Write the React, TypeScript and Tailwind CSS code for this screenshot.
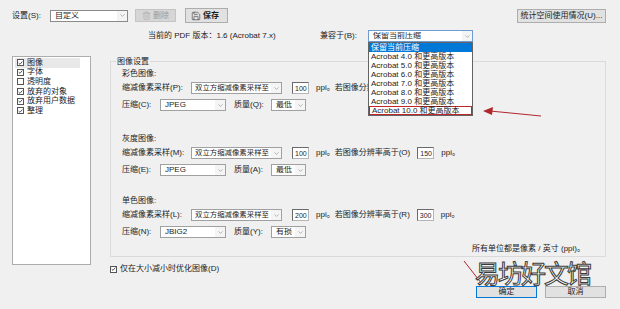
import React from 'react';
import { ChevronDown, Trash2, Save } from 'lucide-react';

const Combo = ({ text, className, border = 'border-[#a0a0a0]', tight = false }: { text: string; className: string; border?: string; tight?: boolean }) => (
  <div className={`${className} h-[12px] bg-white border ${border} flex items-center`}>
    <span className={`flex-1 whitespace-nowrap overflow-hidden ${tight ? 'pl-[3px] text-[7.4px]' : 'pl-[4px]'}`}>{text}</span>
    <span className="w-[10px] h-full flex items-center justify-center bg-[#f4f4f4]">
      <ChevronDown size={7} strokeWidth={1.5} className="text-[#666]" />
    </span>
  </div>
);

const NumInput = ({ value, className = '' }: { value: string; className?: string }) => (
  <div className={`${className} w-[17px] h-[12px] bg-white border border-[#b5b5b5] border-t-[#6a6a6a] border-l-[#6a6a6a] flex items-center pl-[2px] text-[7px]`}>
    {value}
  </div>
);

const Check = ({ checked }: { checked: boolean }) => (
  <span className="w-[7px] h-[7px] border border-[#555] bg-white flex items-center justify-center shrink-0">
    {checked && (
      <svg width="6" height="6" viewBox="0 0 6 6">
        <path d="M0.8 3.1 L2.4 4.6 L5.2 1.2" fill="none" stroke="#222" strokeWidth="0.9" />
      </svg>
    )}
  </span>
);

const categories = [
  { label: '图像', checked: true },
  { label: '字体', checked: true },
  { label: '透明度', checked: false },
  { label: '放弃的对象', checked: true },
  { label: '放弃用户数据', checked: true },
  { label: '整理', checked: true },
];

const versions = [
  'Acrobat 4.0 和更高版本',
  'Acrobat 5.0 和更高版本',
  'Acrobat 6.0 和更高版本',
  'Acrobat 7.0 和更高版本',
  'Acrobat 8.0 和更高版本',
  'Acrobat 9.0 和更高版本',
];

const SampleRow = ({ label, size, res, key2 }: { label: string; size: string; res: string; key2: string }) => (
  <div className="flex items-center h-[12px]">
    <span className="w-[69px]">{label}</span>
    <Combo text="双立方缩减像素采样至" className="w-[91px]" tight />
    <NumInput value={size} className="ml-[10px]" />
    <span className="ml-[7px]">ppi。若图像分辨率高于({key2})</span>
    <NumInput value={res} className="ml-[7px]" />
    <span className="ml-[7px]">ppi。</span>
  </div>
);

const CompressRow = ({ label, codec, qKey, quality }: { label: string; codec: string; qKey: string; quality: string }) => (
  <div className="flex items-center h-[12px]">
    <span className="w-[38px]">{label}</span>
    <Combo text={codec} className="w-[66px]" />
    <span className="ml-[8px] w-[37px]">质量({qKey}):</span>
    <Combo text={quality} className="w-[35px]" />
  </div>
);

export default function App() {
  return (
    <div className="relative w-[620px] h-[309px] overflow-hidden bg-[#f0f0f0] text-[8px] leading-none text-[#1c1c1c] font-['Liberation_Sans','Noto_Sans_CJK_SC',sans-serif]">
      {/* top row */}
      <div className="flex items-center h-[15px] mt-[8px]">
        <span className="ml-[12px] w-[38px]">设置(S):</span>
        <Combo text="自定义" className="w-[78px]" border="border-[#8a8a8a]" />
        <div className="ml-[7px] w-[41px] h-[13px] bg-[#d6d6d6] border border-[#c4c4c4] flex items-center gap-[2px] pl-[6px] text-[#9a9a9a]">
          <Trash2 size={9} strokeWidth={1.2} />
          <span>删除</span>
        </div>
        <div className="ml-[9px] w-[43px] h-[15px] bg-[#e1e1e1] border border-[#adadad] flex items-center gap-[2px] pl-[5px]">
          <Save size={10} strokeWidth={1.2} />
          <span className="font-bold">保存</span>
        </div>
        <div className="ml-auto mr-[14px] w-[89px] h-[14px] bg-[#e1e1e1] border border-[#adadad] flex items-center justify-center">
          统计空间使用情况(U)...
        </div>
      </div>

      {/* version row */}
      <div className="flex items-center h-[12px] mt-[7px]">
        <span className="ml-[148px] w-[172px]">当前的 PDF 版本：1.6 (Acrobat 7.x)</span>
        <span className="w-[48px]">兼容于(B):</span>
        <div className="relative">
          <Combo text="保留当前压缩" className="w-[105px]" border="border-[#6e9bd0]" />
          <div className="absolute left-0 top-full w-[105px] bg-white border border-[#646464] flex flex-col z-10">
            <div className="h-[9px] bg-[#0078d7] text-white flex items-center pl-[2px]">保留当前压缩</div>
            {versions.map((v) => (
              <div key={v} className="h-[9px] flex items-center pl-[2px]">{v}</div>
            ))}
            <div className="h-[9px] flex items-center pl-[2px] border border-[#c0262c]">Acrobat 10.0 和更高版本</div>
          </div>
        </div>
      </div>

      {/* main */}
      <div className="flex mt-[14px]">
        <div className="ml-[12px] w-[79px] h-[209px] bg-white border border-[#adadad] pt-[1px] px-[2px]">
          {categories.map((c, i) => (
            <div key={c.label} className={`h-[9.6px] flex items-center gap-[3px] pl-[2px] ${i === 0 ? 'bg-[#e8e8e8] mr-[8px]' : ''}`}>
              <Check checked={c.checked} />
              <span>{c.label}</span>
            </div>
          ))}
        </div>

        <div className="ml-[19px] w-[496px] flex flex-col">
          <div className="mt-[5px] border border-[#dadada] pl-[11px] pr-[20px] pb-[2px] flex flex-col">
            <span className="-mt-[5px] -ml-[6px] w-fit px-[1px] bg-[#f0f0f0] h-[9px] flex items-center">图像设置</span>
            <span className="mt-[3px] h-[10px] flex items-center">彩色图像:</span>
            <div className="mt-[3px]"><SampleRow label="缩减像素采样(P):" size="100" res="150" key2="I" /></div>
            <div className="mt-[5px]"><CompressRow label="压缩(C):" codec="JPEG" qKey="Q" quality="最低" /></div>
            <span className="mt-[23px] h-[10px] flex items-center">灰度图像:</span>
            <div className="mt-[3px]"><SampleRow label="缩减像素采样(M):" size="100" res="150" key2="O" /></div>
            <div className="mt-[5px]"><CompressRow label="压缩(E):" codec="JPEG" qKey="A" quality="最低" /></div>
            <span className="mt-[20px] h-[10px] flex items-center">单色图像:</span>
            <div className="mt-[3px]"><SampleRow label="缩减像素采样(L):" size="200" res="300" key2="R" /></div>
            <div className="mt-[5px]"><CompressRow label="压缩(N):" codec="JBIG2" qKey="Y" quality="有损" /></div>
            <span className="mt-[6px] h-[10px] flex items-center self-end">所有单位都是像素 / 英寸 (ppi)。</span>
          </div>
          <div className="mt-[7px] h-[10px] flex items-center gap-[3px]">
            <Check checked />
            <span>仅在大小减小时优化图像(D)</span>
          </div>
        </div>
      </div>

      {/* bottom buttons */}
      <div className="flex items-center mt-[12px]">
        <div className="ml-[476px] w-[61px] h-[12px] bg-[#e1e1e1] border border-[#0078d7] flex items-center justify-center">确定</div>
        <div className="ml-[8px] w-[61px] h-[12px] bg-[#e1e1e1] border border-[#adadad] flex items-center justify-center">取消</div>
      </div>

      {/* red annotation arrow */}
      <svg className="absolute left-0 top-0 pointer-events-none" width="620" height="309">
        <line x1="541" y1="116" x2="490" y2="111" stroke="#b0262c" strokeWidth="1" />
        <polygon points="483,111 493,107 492,115" fill="#b0262c" />
        <line x1="464" y1="261" x2="482" y2="284" stroke="#b0262c" strokeWidth="1" />
      </svg>

      {/* watermark */}
      <div className="absolute left-[475px] top-[260px] text-[25px] leading-none text-white tracking-[-2px] [-webkit-text-stroke:1px_#3a3a3a] font-['Noto_Sans_CJK_SC',sans-serif] pointer-events-none">
        易坊好文馆
      </div>
    </div>
  );
}
